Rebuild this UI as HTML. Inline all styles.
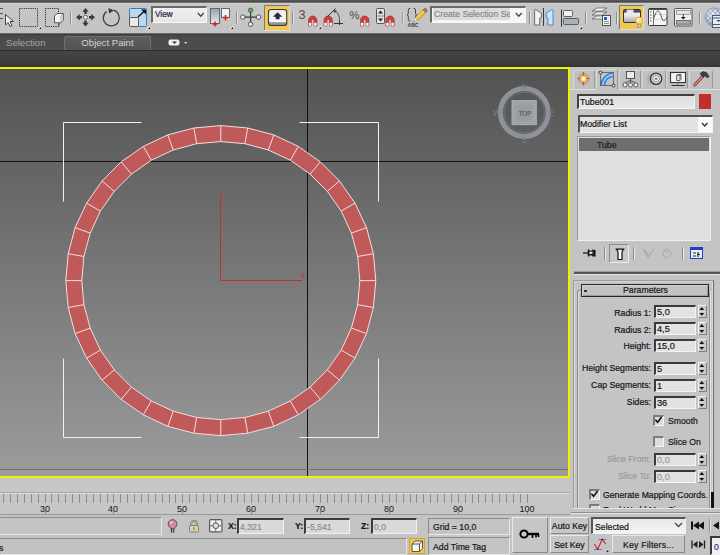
<!DOCTYPE html>
<html><head><meta charset="utf-8">
<style>
*{margin:0;padding:0;box-sizing:border-box}
html,body{width:720px;height:555px;overflow:hidden;background:#c4c4c4;font-family:"Liberation Sans",sans-serif;font-size:8.7px;color:#14141c;-webkit-text-stroke:0.2px currentColor}
.a{position:absolute}
svg{position:absolute;overflow:visible}
svg text{-webkit-text-stroke:0}
.sunk{border-style:solid;border-width:1px;border-color:#6c6c6c #f2f2f2 #f2f2f2 #6c6c6c;background:#e4e4e4}
.fld{position:absolute;border-style:solid;border-width:2px 1px 1px 2px;border-color:#3a3a3a #f4f4f4 #f4f4f4 #3a3a3a;background:#e2e2e2;padding-left:2px;line-height:9px;white-space:nowrap;overflow:hidden}
.raised{border-style:solid;border-width:1px;border-color:#ececec #8a8a8a #8a8a8a #ececec;background:#c4c4c4}
.lbl{position:absolute;white-space:nowrap;text-align:right;line-height:10px}
.sep{position:absolute;width:1px;height:12px;top:12px;background:#8c8c8c;border-right:1px solid #e4e4e4;box-sizing:content-box}
.spin{position:absolute;width:9px;height:13px;border:1px solid;border-color:#f0f0f0 #808080 #808080 #f0f0f0;background:#c8c8c8}
.chk{position:absolute;width:11px;height:11px;border-style:solid;border-width:2px 1px 1px 2px;border-color:#7c7c7c #f6f6f6 #f6f6f6 #7c7c7c;background:#dcdcdc}
.tab{position:absolute;top:70px;width:22px;height:19px;border:1px solid;border-color:#d6d6d6 #9a9a9a transparent #d6d6d6;background:#c0c0c0;border-radius:2px 2px 0 0}
</style></head><body>
<!-- top strip & toolbar -->
<div class="a" style="left:0;top:0;width:720px;height:3px;background:linear-gradient(#5a5a5a,#4a4a4a 60%,#8c8c8c)"></div>
<div class="a" style="left:0;top:3px;width:720px;height:30px;background:linear-gradient(#d0d0d0,#c6c6c6 2px,#c4c4c4 100%)"></div>
<div class="a" style="left:0;top:33px;width:720px;height:1px;background:#6a6a6a"></div>

<!-- toolbar icons -->
<svg style="left:0;top:0" width="720" height="34" viewBox="0 0 720 34">
<!-- select object: lines + cursor -->
<path d="M0,8.5H3M0,13.5H3M0,18.5H3" stroke="#555" stroke-width="1.2"/>
<path d="M5.5,14.5V25L8,22.5L10,26.5L12,25.5L10,21.5H13.5Z" fill="#f4f4f4" stroke="#333" stroke-width="0.9" stroke-linejoin="round"/>
<!-- select region rect -->
<rect x="19.5" y="8.5" width="18" height="18" fill="none" stroke="#333" stroke-width="1" stroke-dasharray="1.2,1"/>
<path d="M37.5,29.5L41.0,26" stroke="#f4f4f4" stroke-width="1"/><path d="M39.0,29H41.0V27Z" fill="#111"/>
<!-- select window/crossing -->
<rect x="45.5" y="8.5" width="13" height="18" fill="none" stroke="#333" stroke-width="1" stroke-dasharray="1.2,1"/>
<path d="M59,22V26.5" stroke="#555" stroke-width="1"/>
<path d="M54.5,16L57,13.5H63.5V20L61,22.8H54.5Z" fill="#f2f4f6" stroke="#555" stroke-width="1" stroke-linejoin="round"/>
<path d="M61,16V22.5M61,16L63.5,13.5" fill="none" stroke="#888" stroke-width="0.7"/>
<path d="M61.3,16.3L63.2,14.2V19.8L61.3,22Z" fill="#c8ccd0"/>
<!-- sep -->
<path d="M70.5,12V25" stroke="#8a8a8a"/><path d="M71.5,12V25" stroke="#e4e4e4"/>
<!-- move -->
<g fill="#3a3a3a"><path d="M85.5,8L82.3,11.8H84.3V14H86.7V11.8H88.7Z"/><path d="M85.5,26.6L82.3,22.8H84.3V20.6H86.7V22.8H88.7Z"/><path d="M76,17.3L79.8,14.1V16.1H82V18.5H79.8V20.5Z"/><path d="M95,17.3L91.2,14.1V16.1H89V18.5H91.2V20.5Z"/></g>
<circle cx="85.5" cy="17.3" r="2" fill="#f6f6f6" stroke="#666" stroke-width="1"/>
<!-- rotate -->
<path d="M113.5,10.2A8,8 0 1 1 106.5,11.5" fill="none" stroke="#3c3c3c" stroke-width="1.2"/>
<path d="M108.5,8L114,10.5L109,13.5Z" fill="#3c3c3c"/>
<!-- scale -->
<rect x="129.5" y="8.5" width="17" height="18" fill="#bcd8ea" stroke="#3a7ac0" stroke-width="1" rx="1"/>
<rect x="129.5" y="17.5" width="9" height="9" fill="#e8e8e8" stroke="#555" stroke-width="1" rx="1"/>
<path d="M138,17L145,10.5" stroke="#111" stroke-width="1.3"/><path d="M141,9.5H146V14.5Z" fill="#111"/>
<path d="M146.5,29.5L150.0,26" stroke="#f4f4f4" stroke-width="1"/><path d="M148.0,29H150.0V27Z" fill="#111"/>
<!-- mirror-ish pivot icon -->
<rect x="210.5" y="8.5" width="9" height="15" fill="url(#gg)" stroke="#606870" stroke-width="1"/>
<rect x="221.5" y="8.5" width="8" height="9" fill="#f2f2f2" stroke="#606870" stroke-width="1"/>
<path d="M215,21.5V26.5M212.5,24H217.5M225.5,15V20.5M223,17.5H228" stroke="#e01818" stroke-width="1.5"/>
<path d="M229.5,29.5L233.0,26" stroke="#f4f4f4" stroke-width="1"/><path d="M231.0,29H233.0V27Z" fill="#111"/>
<defs><linearGradient id="gg" x1="0" x2="0" y1="0" y2="1"><stop offset="0" stop-color="#98a0a8"/><stop offset="1" stop-color="#e8eaec"/></linearGradient></defs>
<path d="M236.5,12V24" stroke="#8a8a8a"/><path d="M237.5,12V24" stroke="#e4e4e4"/>
<!-- link/pivot -->
<path d="M250.6,10.5V24.3M242.8,17.1H258.6" stroke="#3c3c3c" stroke-width="1.2"/>
<circle cx="250.6" cy="10.3" r="2.2" fill="#58b048" stroke="#3a5a3a" stroke-width="0.8"/>
<circle cx="242.8" cy="17.1" r="2.2" fill="#f0f0f0" stroke="#444" stroke-width="0.9"/>
<circle cx="258.6" cy="17.1" r="2.2" fill="#f0f0f0" stroke="#444" stroke-width="0.9"/>
<circle cx="250.6" cy="24.3" r="2.2" fill="#f0f0f0" stroke="#444" stroke-width="0.9"/>
<!-- pressed yellow button -->
<rect x="264.5" y="5.5" width="25" height="25" fill="#f2c84e" stroke="#dcdcdc" stroke-width="1"/><path d="M264.5,30V5.5H289.5" fill="none" stroke="#7a7a7a" stroke-width="1"/>
<rect x="268.5" y="9.5" width="18.2" height="16" rx="2.5" fill="url(#kg)" stroke="#3a3a3a" stroke-width="1.1"/>
<defs><linearGradient id="kg" x1="0" x2="0" y1="0" y2="1"><stop offset="0" stop-color="#e8eaee"/><stop offset="0.4" stop-color="#f2f4f6"/><stop offset="0.76" stop-color="#fafafa"/><stop offset="0.78" stop-color="#a8aeb6"/><stop offset="1" stop-color="#7a8088"/></linearGradient></defs>
<path d="M277.6,12.2L272.8,16.8H275.6V19.2H279.6V16.8H282.4Z" fill="#2a2e34"/>
<path d="M292.5,12V24" stroke="#8a8a8a"/><path d="M293.5,12V24" stroke="#e4e4e4"/>
<!-- 3 snap -->
<text x="298.6" y="18.6" font-size="12.6" fill="#4a4a4a" font-family="Liberation Sans">3</text>
<g id="mag"><path d="M308.5,26V20.2A4.2,4.2 0 0 1 316.9,20.2V26H314V20.6A1.3,1.3 0 0 0 311.4,20.6V26Z" fill="#d83a3a" stroke="#8a2a2a" stroke-width="0.6"/><rect x="308.8" y="22.8" width="2.5" height="3" fill="#f4f4f4"/><rect x="314.1" y="22.8" width="2.5" height="3" fill="#f4f4f4"/></g>
<path d="M317.5,29.5L321.0,26" stroke="#f4f4f4" stroke-width="1"/><path d="M319.0,29H321.0V27Z" fill="#111"/>
<!-- angle snap -->
<use href="#mag" x="15.5"/>
<path d="M327.5,16.5L335.5,8.5M334,23.5H343M339.5,21V25" stroke="#333" stroke-width="1"/>
<path d="M335,10.5Q340,14 339.5,22" fill="none" stroke="#444" stroke-width="0.9"/>
<path d="M333,10L337,11L334.5,13Z" fill="#333"/>
<!-- percent snap -->
<text x="349.3" y="18.6" font-size="11.5" fill="#4a4a4a" font-family="Liberation Sans">%</text>
<use href="#mag" x="52"/>
<!-- spinner snap -->
<rect x="376.5" y="8.5" width="8" height="15" rx="1" fill="#e4e4e4" stroke="#555" stroke-width="1"/>
<path d="M378,13.5H383L380.5,10.5ZM378,18.5H383L380.5,21.5Z" fill="#222"/>
<path d="M376.5,16H384.5" stroke="#666" stroke-width="0.8"/>
<use href="#mag" x="77.3"/>
<path d="M402.5,12V24" stroke="#9a9a9a"/><path d="M403.5,12V24" stroke="#dcdcdc"/>
<!-- named sel -->
<path d="M410.3,8.3Q408.3,8.3 408.3,10V13.2Q408.3,14.6 407,14.8Q408.3,15 408.3,16.4V19.6Q408.3,21.2 410.3,21.2" fill="none" stroke="#444" stroke-width="1"/>
<path d="M413.5,8.3Q415.5,8.3 415.5,10V13.2Q415.5,14.6 416.8,14.8Q415.5,15 415.5,16.4V19.6Q415.5,21.2 413.5,21.2" fill="none" stroke="#444" stroke-width="1"/>
<path d="M415.2,17.6L423,9.8L425.8,12.6L418,20.4Z" fill="#f0c030" stroke="#8a6a20" stroke-width="0.5"/>
<path d="M416,18.4L423.6,10.8" stroke="#fae890" stroke-width="0.9"/>
<path d="M423,9.8L424.2,8.6Q425.2,7.8 426.2,8.8L426.8,9.4Q427.6,10.4 426.9,11.4L425.8,12.6Z" fill="#c07840" stroke="#7a4a20" stroke-width="0.5"/>
<path d="M415.2,17.6L418,20.4L413.6,21.8Z" fill="#f2f2f2" stroke="#888" stroke-width="0.5"/>
<text x="413" y="27.3" font-size="5" fill="#3a3a3a" text-anchor="middle" font-family="Liberation Sans" font-weight="bold">ABC</text>
</svg>
<!-- View dropdown -->
<div class="a" style="left:151px;top:6px;width:56px;height:17px;border-style:solid;border-width:2px 1px 1px 2px;border-color:#6a6a6a #f8f8f8 #f8f8f8 #6a6a6a;background:linear-gradient(#f0f0f0,#e6e6e6);padding:2px 0 0 2px;line-height:10px;color:#202040;font-size:8.2px">View</div>
<svg style="left:197px;top:12px" width="8" height="6"><path d="M0.8,1L3.75,4.2L6.7,1" fill="none" stroke="#444" stroke-width="1.3"/></svg>
<!-- Create Selection Set -->
<div class="a" style="left:430px;top:6px;width:96px;height:17px;border-style:solid;border-width:2px 1px 1px 2px;border-color:#6a6a6a #f8f8f8 #f8f8f8 #6a6a6a;background:#f6f6f6;line-height:10px"></div>
<div class="a" style="left:433px;top:8px;width:77px;height:12px;background:#dcdcdc;padding:1px 0 0 1px;line-height:10px;color:#8a8a8a;white-space:nowrap;overflow:hidden">Create Selection Se</div>
<svg style="left:515px;top:12px" width="8" height="6"><path d="M0.8,1L3.75,4.2L6.7,1" fill="none" stroke="#444" stroke-width="1.3"/></svg>
<svg style="left:0;top:0" width="720" height="34" viewBox="0 0 720 34">
<path d="M529.5,12V24" stroke="#8a8a8a"/><path d="M530.5,12V24" stroke="#e4e4e4"/>
<!-- mirror -->
<path d="M534.6,25V10.6Q534.6,9.2 536,9.7L541.4,13.2V17.3L539.7,18V25Z" fill="#f0f2f4" stroke="#5a6068" stroke-width="0.9" stroke-linejoin="round"/>
<path d="M543.5,8V26" stroke="#3a3a3a" stroke-width="1"/>
<path d="M553,25V10.6Q553,9.2 551.6,9.7L546.2,13.2V17.3L547.9,18V25Z" fill="#cce4f4" stroke="#3a80c8" stroke-width="0.9" stroke-linejoin="round"/>
<!-- align -->
<path d="M561.5,9.5V26.5" stroke="#333" stroke-width="1"/>
<rect x="563.5" y="10.5" width="9" height="6" rx="1" fill="#f0f0f0" stroke="#555" stroke-width="0.9"/>
<rect x="563.5" y="18.5" width="15" height="6" rx="1" fill="#a8b0b8" stroke="#555" stroke-width="0.9"/>
<path d="M578.5,29.5L582.0,26" stroke="#f4f4f4" stroke-width="1"/><path d="M580.0,29H582.0V27Z" fill="#111"/>
<path d="M585.5,12V24" stroke="#8a8a8a"/><path d="M586.5,12V24" stroke="#e4e4e4"/>
<!-- layers -->
<path d="M592,11L597,8H607L602,11Z M592,15L597,12H607L602,15Z M592,19L597,16H604L602,19Z" fill="#f4f4f4" stroke="#666" stroke-width="0.8"/>
<rect x="602.5" y="15.5" width="8" height="10" fill="#f2f2f2" stroke="#444" stroke-width="0.9"/>
<rect x="604" y="17" width="3" height="3" fill="#2060c0"/>
<path d="M604,21.5H609M604,23.5H609" stroke="#666" stroke-width="0.7"/>
<path d="M616.5,12V24" stroke="#8a8a8a"/><path d="M617.5,12V24" stroke="#e4e4e4"/>
<!-- scene explorer (pressed) -->
<rect x="619.5" y="5.5" width="24" height="24" fill="#f2c84e" stroke="#dcdcdc" stroke-width="1"/><path d="M619.5,29.5V5.5H643.5" fill="none" stroke="#7a7a7a" stroke-width="1"/>
<defs><linearGradient id="fg" x1="0" x2="0" y1="0" y2="1"><stop offset="0" stop-color="#fafafa"/><stop offset="0.5" stop-color="#e6e6e6"/><stop offset="1" stop-color="#a0a4a8"/></linearGradient></defs>
<rect x="623.5" y="9.5" width="17" height="13" rx="1" fill="url(#fg)" stroke="#333" stroke-width="1"/>
<rect x="624" y="10" width="16" height="2.6" fill="#4a4e54"/>
<rect x="626.5" y="9.6" width="7" height="3.4" fill="#e4e6e8"/>
<circle cx="639" cy="20.6" r="3.5" fill="#f6e27a" stroke="#e8a040" stroke-width="0.9"/>
<circle cx="638.2" cy="19.8" r="1.3" fill="#fdf8d0"/>
<rect x="637.4" y="24.2" width="3.2" height="2.8" rx="0.8" fill="#d0d4d8" stroke="#555" stroke-width="0.5"/>
<!-- curve editor -->
<rect x="648.5" y="8.5" width="18.5" height="17" rx="1" fill="#f6f6f6" stroke="#3a3a3a" stroke-width="1"/>
<path d="M649,9.3H666.5" stroke="#3a3a3a" stroke-width="1.2"/>
<path d="M653.5,9.5V25M654,14.5H666.5M654,19.5H666.5" stroke="#c8c8c8" stroke-width="0.7"/>
<path d="M653.5,9.5V25" stroke="#555" stroke-width="0.8"/>
<path d="M650,12H651.5M650,15H651.5M650,18H651.5M650,21H651.5" stroke="#555" stroke-width="1"/>
<path d="M653.8,18.5C655.5,13 656.5,11 658,11S660.5,14 661.5,17S663,20.8 664,20.8S666,19 667,17" fill="none" stroke="#555" stroke-width="1"/>
<!-- dope / track -->
<rect x="674.5" y="8.5" width="17.5" height="17.5" rx="1" fill="#f0f0f0" stroke="#555" stroke-width="1"/>
<rect x="676.3" y="10.6" width="14" height="3.6" fill="#e8e8e8" stroke="#7a7a7a" stroke-width="0.7"/>
<rect x="676.3" y="20.6" width="14" height="3.6" fill="#a4acb4" stroke="#555" stroke-width="0.8"/>
<path d="M683.3,14.3V17.5" stroke="#222" stroke-width="0.9"/>
<path d="M680.8,17H685.8L683.3,19.6Z" fill="#222"/>
<path d="M699.5,12V24" stroke="#8a8a8a"/><path d="M700.5,12V24" stroke="#e4e4e4"/>
<!-- render setup (clipped) -->
<defs><pattern id="chk" width="5" height="5" patternUnits="userSpaceOnUse" x="704" y="7"><rect width="5" height="5" fill="#eef2f8"/><rect width="2.5" height="2.5" fill="#8aa0bc"/><rect x="2.5" y="2.5" width="2.5" height="2.5" fill="#8aa0bc"/></pattern>
<radialGradient id="shd" cx="0.4" cy="0.35" r="0.7"><stop offset="0" stop-color="#fff" stop-opacity="0.3"/><stop offset="1" stop-color="#304870" stop-opacity="0.45"/></radialGradient></defs>
<circle cx="714.5" cy="17.3" r="9.4" fill="url(#chk)"/>
<circle cx="714.5" cy="17.3" r="9.4" fill="url(#shd)" stroke="#7088a8" stroke-width="0.6"/>
<rect x="712.5" y="15.5" width="9" height="12" fill="#e8ecf0" stroke="#4a5a78" stroke-width="1"/>
<path d="M713,18H721M713,24.5H721" stroke="#4a5a78" stroke-width="1"/>
<path d="M716.5,20L718.5,22L720.5,20Z" fill="#2a3a58"/>
</svg>
<!-- tab bar -->
<div class="a" style="left:0;top:34px;width:720px;height:16px;background:linear-gradient(#3c3c3c 0px,#4a4a4a 2px,#4d4d4d 100%)"></div>
<div class="a" style="left:0;top:50px;width:720px;height:1px;background:#2c2c2c"></div>
<div class="a" style="left:0;top:51px;width:720px;height:16px;background:linear-gradient(#464646,#3a3a3a 85%,#333)"></div>
<div class="a" style="left:6px;top:37px;font-size:9.6px;color:#a2a6aa;line-height:11px;-webkit-text-stroke:0">Selection</div>
<div class="a" style="left:64px;top:36px;width:87px;height:14px;background:linear-gradient(#5c5c5c,#545454);border:1px solid #6e6e6e;border-bottom:none;border-radius:2px 2px 0 0"></div>
<div class="a" style="left:64px;top:37px;width:87px;text-align:center;font-size:9.6px;color:#d2d4d6;line-height:11px;-webkit-text-stroke:0">Object Paint</div>
<svg style="left:168px;top:39px" width="20" height="8"><rect x="0.5" y="0.5" width="11" height="6" rx="2" fill="#f0f0f0"/><path d="M4,2.5h5l-2.5,2.5z" fill="#333"/><path d="M16,3h3.5l-1.75,2z" fill="#cfcfcf"/></svg>

<!-- viewport -->
<div class="a" style="left:0;top:67px;width:570px;height:411px;background:#f0f000"></div>
<div class="a" style="left:0;top:69px;width:568px;height:407px;background:linear-gradient(#525252 0%,#5a5a5a 10%,#9c9c9c 100%);overflow:hidden">
<svg width="568" height="407" style="left:0;top:0" viewBox="0 69 568 407">
<line x1="0" y1="161.5" x2="568" y2="161.5" stroke="#111" stroke-width="1"/>
<line x1="307.5" y1="69" x2="307.5" y2="476" stroke="#111" stroke-width="1"/>
<line x1="0" y1="469.5" x2="568" y2="469.5" stroke="#707070" stroke-width="1"/>
<g fill="none" stroke="#f0f0f0" stroke-width="1">
<path d="M63.5,201.5V122.5H141.5"/><path d="M299.5,122.5H378.5V201.5"/>
<path d="M63.5,358.5V437.5H141.5"/><path d="M299.5,437.5H378.5V358.5"/>
</g>
<path d="M375.8,280.6 L373.4,253.7 L366.5,227.6 L355.0,203.1 L339.5,181.0 L320.4,161.9 L298.3,146.4 L273.8,134.9 L247.7,128.0 L220.8,125.6 L193.9,128.0 L167.8,134.9 L143.3,146.4 L121.2,161.9 L102.1,181.0 L86.6,203.1 L75.1,227.6 L68.2,253.7 L65.8,280.6 L68.2,307.5 L75.1,333.6 L86.6,358.1 L102.1,380.2 L121.2,399.3 L143.3,414.8 L167.8,426.3 L193.9,433.2 L220.8,435.6 L247.7,433.2 L273.8,426.3 L298.3,414.8 L320.4,399.3 L339.5,380.2 L355.0,358.1 L366.5,333.6 L373.4,307.5Z M357.7,304.7 L351.4,328.1 L341.2,350.1 L327.3,369.9 L310.1,387.1 L290.3,401.0 L268.3,411.2 L244.9,417.5 L220.8,419.6 L196.7,417.5 L173.3,411.2 L151.3,401.0 L131.5,387.1 L114.3,369.9 L100.4,350.1 L90.2,328.1 L83.9,304.7 L81.8,280.6 L83.9,256.5 L90.2,233.1 L100.4,211.1 L114.3,191.3 L131.5,174.1 L151.3,160.2 L173.3,150.0 L196.7,143.7 L220.8,141.6 L244.9,143.7 L268.3,150.0 L290.3,160.2 L310.1,174.1 L327.3,191.3 L341.2,211.1 L351.4,233.1 L357.7,256.5 L359.8,280.6Z" fill="#c05a5a" fill-rule="evenodd" stroke="#f2dede" stroke-width="1"/><path d="M375.8,280.6L359.8,280.6M373.4,253.7L357.7,256.5M366.5,227.6L351.4,233.1M355.0,203.1L341.2,211.1M339.5,181.0L327.3,191.3M320.4,161.9L310.1,174.1M298.3,146.4L290.3,160.2M273.8,134.9L268.3,150.0M247.7,128.0L244.9,143.7M220.8,125.6L220.8,141.6M193.9,128.0L196.7,143.7M167.8,134.9L173.3,150.0M143.3,146.4L151.3,160.2M121.2,161.9L131.5,174.1M102.1,181.0L114.3,191.3M86.6,203.1L100.4,211.1M75.1,227.6L90.2,233.1M68.2,253.7L83.9,256.5M65.8,280.6L81.8,280.6M68.2,307.5L83.9,304.7M75.1,333.6L90.2,328.1M86.6,358.1L100.4,350.1M102.1,380.2L114.3,369.9M121.2,399.3L131.5,387.1M143.3,414.8L151.3,401.0M167.8,426.3L173.3,411.2M193.9,433.2L196.7,417.5M220.8,435.6L220.8,419.6M247.7,433.2L244.9,417.5M273.8,426.3L268.3,411.2M298.3,414.8L290.3,401.0M320.4,399.3L310.1,387.1M339.5,380.2L327.3,369.9M355.0,358.1L341.2,350.1M366.5,333.6L351.4,328.1M373.4,307.5L357.7,304.7" stroke="#f2dede" stroke-width="1"/>
<g stroke="#c03030" stroke-width="1" fill="none"><path d="M220.5,199V280.5H302"/></g>
<text x="219.8" y="196.3" font-size="9" fill="#c83434" font-family="Liberation Sans">y</text>
<text x="300.6" y="277.8" font-size="9.6" fill="#c83434" font-family="Liberation Sans">x</text>
<!-- viewcube -->
<g>
<circle cx="524.3" cy="112.5" r="23.7" fill="none" stroke="#8e9399" stroke-width="5.4"/>
<circle cx="524.3" cy="112.5" r="21" fill="none" stroke="#5e6266" stroke-width="0.9"/>
<circle cx="524.3" cy="112.5" r="20.1" fill="none" stroke="#7a7e82" stroke-width="0.6"/>
<rect x="511.7" y="100.1" width="25" height="25" fill="#9ea3a8"/>
<rect x="512.2" y="100.6" width="24" height="24" fill="none" stroke="#a8adb2" stroke-width="1"/>
<rect x="516.5" y="105" width="15.5" height="15.5" fill="#989da2"/>
<text x="524.8" y="115.6" font-size="6.6" fill="#62666c" text-anchor="middle" font-family="Liberation Sans" font-weight="bold" letter-spacing="-0.3">TOP</text>
<text x="524.4" y="89.6" font-size="8.4" fill="#7c8288" text-anchor="middle" font-family="Liberation Sans">N</text>
<text x="524.4" y="142.8" font-size="8.4" fill="#7c8288" text-anchor="middle" font-family="Liberation Sans">S</text>
<text x="496.8" y="115.6" font-size="8.4" fill="#7c8288" text-anchor="middle" font-family="Liberation Sans">W</text>
<text x="551.4" y="115.6" font-size="8.4" fill="#7c8288" text-anchor="middle" font-family="Liberation Sans">E</text>
</g>
</svg>
</div>

<!-- track bar -->
<div class="a" style="left:0;top:478px;width:570px;height:37px;background:#c6c6c6"></div>
<svg width="570" height="40" style="left:0;top:0" viewBox="0 0 570 40"></svg>
<svg width="570" height="40" style="left:0;top:478px" viewBox="0 478 570 40">
<line x1="0" y1="492.5" x2="570" y2="492.5" stroke="#a8a8a8"/>
<line x1="0" y1="493.5" x2="570" y2="493.5" stroke="#dedede"/>
<g font-size="9" fill="#14141c" font-family="Liberation Sans" style="-webkit-text-stroke:0.25px #14141c"><line x1="3.5" y1="494" x2="3.5" y2="503" stroke="#8a8a8a"/><line x1="10.5" y1="494" x2="10.5" y2="503" stroke="#8a8a8a"/><line x1="17.5" y1="494" x2="17.5" y2="503" stroke="#8a8a8a"/><line x1="24.5" y1="494" x2="24.5" y2="503" stroke="#8a8a8a"/><line x1="31.5" y1="494" x2="31.5" y2="503" stroke="#8a8a8a"/><line x1="38.5" y1="494" x2="38.5" y2="503" stroke="#8a8a8a"/><line x1="45.5" y1="494" x2="45.5" y2="503" stroke="#8a8a8a"/><line x1="45.5" y1="511" x2="45.5" y2="515" stroke="#8a8a8a"/><text x="45.0" y="512" text-anchor="middle">30</text><line x1="51.5" y1="494" x2="51.5" y2="503" stroke="#8a8a8a"/><line x1="58.5" y1="494" x2="58.5" y2="503" stroke="#8a8a8a"/><line x1="65.5" y1="494" x2="65.5" y2="503" stroke="#8a8a8a"/><line x1="72.5" y1="494" x2="72.5" y2="503" stroke="#8a8a8a"/><line x1="79.5" y1="494" x2="79.5" y2="503" stroke="#8a8a8a"/><line x1="86.5" y1="494" x2="86.5" y2="503" stroke="#8a8a8a"/><line x1="93.5" y1="494" x2="93.5" y2="503" stroke="#8a8a8a"/><line x1="100.5" y1="494" x2="100.5" y2="503" stroke="#8a8a8a"/><line x1="107.5" y1="494" x2="107.5" y2="503" stroke="#8a8a8a"/><line x1="113.5" y1="494" x2="113.5" y2="503" stroke="#8a8a8a"/><line x1="113.5" y1="511" x2="113.5" y2="515" stroke="#8a8a8a"/><text x="113.0" y="512" text-anchor="middle">40</text><line x1="120.5" y1="494" x2="120.5" y2="503" stroke="#8a8a8a"/><line x1="127.5" y1="494" x2="127.5" y2="503" stroke="#8a8a8a"/><line x1="134.5" y1="494" x2="134.5" y2="503" stroke="#8a8a8a"/><line x1="141.5" y1="494" x2="141.5" y2="503" stroke="#8a8a8a"/><line x1="148.5" y1="494" x2="148.5" y2="503" stroke="#8a8a8a"/><line x1="155.5" y1="494" x2="155.5" y2="503" stroke="#8a8a8a"/><line x1="162.5" y1="494" x2="162.5" y2="503" stroke="#8a8a8a"/><line x1="169.5" y1="494" x2="169.5" y2="503" stroke="#8a8a8a"/><line x1="175.5" y1="494" x2="175.5" y2="503" stroke="#8a8a8a"/><line x1="182.5" y1="494" x2="182.5" y2="503" stroke="#8a8a8a"/><line x1="182.5" y1="511" x2="182.5" y2="515" stroke="#8a8a8a"/><text x="182.0" y="512" text-anchor="middle">50</text><line x1="189.5" y1="494" x2="189.5" y2="503" stroke="#8a8a8a"/><line x1="196.5" y1="494" x2="196.5" y2="503" stroke="#8a8a8a"/><line x1="203.5" y1="494" x2="203.5" y2="503" stroke="#8a8a8a"/><line x1="210.5" y1="494" x2="210.5" y2="503" stroke="#8a8a8a"/><line x1="217.5" y1="494" x2="217.5" y2="503" stroke="#8a8a8a"/><line x1="224.5" y1="494" x2="224.5" y2="503" stroke="#8a8a8a"/><line x1="231.5" y1="494" x2="231.5" y2="503" stroke="#8a8a8a"/><line x1="237.5" y1="494" x2="237.5" y2="503" stroke="#8a8a8a"/><line x1="244.5" y1="494" x2="244.5" y2="503" stroke="#8a8a8a"/><line x1="251.5" y1="494" x2="251.5" y2="503" stroke="#8a8a8a"/><line x1="251.5" y1="511" x2="251.5" y2="515" stroke="#8a8a8a"/><text x="251.0" y="512" text-anchor="middle">60</text><line x1="258.5" y1="494" x2="258.5" y2="503" stroke="#8a8a8a"/><line x1="265.5" y1="494" x2="265.5" y2="503" stroke="#8a8a8a"/><line x1="272.5" y1="494" x2="272.5" y2="503" stroke="#8a8a8a"/><line x1="279.5" y1="494" x2="279.5" y2="503" stroke="#8a8a8a"/><line x1="286.5" y1="494" x2="286.5" y2="503" stroke="#8a8a8a"/><line x1="293.5" y1="494" x2="293.5" y2="503" stroke="#8a8a8a"/><line x1="299.5" y1="494" x2="299.5" y2="503" stroke="#8a8a8a"/><line x1="306.5" y1="494" x2="306.5" y2="503" stroke="#8a8a8a"/><line x1="313.5" y1="494" x2="313.5" y2="503" stroke="#8a8a8a"/><line x1="320.5" y1="494" x2="320.5" y2="503" stroke="#8a8a8a"/><line x1="320.5" y1="511" x2="320.5" y2="515" stroke="#8a8a8a"/><text x="320.0" y="512" text-anchor="middle">70</text><line x1="327.5" y1="494" x2="327.5" y2="503" stroke="#8a8a8a"/><line x1="334.5" y1="494" x2="334.5" y2="503" stroke="#8a8a8a"/><line x1="341.5" y1="494" x2="341.5" y2="503" stroke="#8a8a8a"/><line x1="348.5" y1="494" x2="348.5" y2="503" stroke="#8a8a8a"/><line x1="355.5" y1="494" x2="355.5" y2="503" stroke="#8a8a8a"/><line x1="361.5" y1="494" x2="361.5" y2="503" stroke="#8a8a8a"/><line x1="368.5" y1="494" x2="368.5" y2="503" stroke="#8a8a8a"/><line x1="375.5" y1="494" x2="375.5" y2="503" stroke="#8a8a8a"/><line x1="382.5" y1="494" x2="382.5" y2="503" stroke="#8a8a8a"/><line x1="389.5" y1="494" x2="389.5" y2="503" stroke="#8a8a8a"/><line x1="389.5" y1="511" x2="389.5" y2="515" stroke="#8a8a8a"/><text x="389.0" y="512" text-anchor="middle">80</text><line x1="396.5" y1="494" x2="396.5" y2="503" stroke="#8a8a8a"/><line x1="403.5" y1="494" x2="403.5" y2="503" stroke="#8a8a8a"/><line x1="410.5" y1="494" x2="410.5" y2="503" stroke="#8a8a8a"/><line x1="416.5" y1="494" x2="416.5" y2="503" stroke="#8a8a8a"/><line x1="423.5" y1="494" x2="423.5" y2="503" stroke="#8a8a8a"/><line x1="430.5" y1="494" x2="430.5" y2="503" stroke="#8a8a8a"/><line x1="437.5" y1="494" x2="437.5" y2="503" stroke="#8a8a8a"/><line x1="444.5" y1="494" x2="444.5" y2="503" stroke="#8a8a8a"/><line x1="451.5" y1="494" x2="451.5" y2="503" stroke="#8a8a8a"/><line x1="458.5" y1="494" x2="458.5" y2="503" stroke="#8a8a8a"/><line x1="458.5" y1="511" x2="458.5" y2="515" stroke="#8a8a8a"/><text x="458.0" y="512" text-anchor="middle">90</text><line x1="465.5" y1="494" x2="465.5" y2="503" stroke="#8a8a8a"/><line x1="472.5" y1="494" x2="472.5" y2="503" stroke="#8a8a8a"/><line x1="478.5" y1="494" x2="478.5" y2="503" stroke="#8a8a8a"/><line x1="485.5" y1="494" x2="485.5" y2="503" stroke="#8a8a8a"/><line x1="492.5" y1="494" x2="492.5" y2="503" stroke="#8a8a8a"/><line x1="499.5" y1="494" x2="499.5" y2="503" stroke="#8a8a8a"/><line x1="506.5" y1="494" x2="506.5" y2="503" stroke="#8a8a8a"/><line x1="513.5" y1="494" x2="513.5" y2="503" stroke="#8a8a8a"/><line x1="520.5" y1="494" x2="520.5" y2="503" stroke="#8a8a8a"/><line x1="527.5" y1="494" x2="527.5" y2="503" stroke="#8a8a8a"/><line x1="527.5" y1="511" x2="527.5" y2="515" stroke="#8a8a8a"/><text x="527.0" y="512" text-anchor="middle">100</text></g>
<line x1="0" y1="514.5" x2="570" y2="514.5" stroke="#9a9a9a"/>
</svg>

<!-- command panel -->
<div class="a" style="left:570px;top:67px;width:150px;height:448px;background:#c4c4c4"></div>
<div class="a" style="left:570px;top:89px;width:150px;height:1px;background:#e0e0e0"></div>
<div class="tab" style="left:573px"></div>
<div class="tab" style="left:596px;top:69px;height:21px;background:#c4c4c4;border-bottom:none"></div>
<div class="tab" style="left:619px"></div>
<div class="tab" style="left:642px;width:24px"></div>
<div class="tab" style="left:666px"></div>
<div class="tab" style="left:689px;width:24px"></div>

<svg style="left:0;top:0" width="720" height="95" viewBox="0 0 720 95">
<!-- create star -->
<g transform="translate(583.5,78.7)">
<path d="M0,-6.8V6.8M-6,0H6" stroke="#c84838" stroke-width="1.3"/>
<path d="M-4.3,-4.3L4.3,4.3M4.3,-4.3L-4.3,4.3M-5.5,-2.2L5.5,2.2M-5.5,2.2L5.5,-2.2M-2.2,-5.5L2.2,5.5M2.2,-5.5L-2.2,5.5" stroke="#d86a50" stroke-width="0.8"/>
<circle r="3.4" fill="#f8c840" opacity="0.7"/>
<circle r="2.5" fill="#fae060"/><circle r="1.4" fill="#fffef0"/>
</g>
<!-- modify -->
<defs><linearGradient id="bg1" x1="0" y1="1" x2="1" y2="0"><stop offset="0" stop-color="#3a86d4"/><stop offset="1" stop-color="#5aa8e8"/></linearGradient></defs>
<rect x="600.5" y="72.5" width="13" height="13" fill="none" stroke="#555" stroke-width="0.8"/>
<path d="M600.8,85.5A12.7,12.7 0 0 1 613.5,72.8V76.8A8.7,8.7 0 0 0 604.8,85.5Z" fill="url(#bg1)" stroke="#2a6ab8" stroke-width="0.7"/>
<path d="M602.8,85.3A10.7,10.7 0 0 1 613.3,74.8" fill="none" stroke="#d0ecfc" stroke-width="1"/>
<circle cx="600.5" cy="72.5" r="1.5" fill="#e0e0e0" stroke="#3a3a3a" stroke-width="1"/>
<circle cx="613.5" cy="85.5" r="1.5" fill="#e0e0e0" stroke="#3a3a3a" stroke-width="1"/>
<!-- hierarchy -->
<rect x="626.5" y="71.5" width="8" height="7" fill="#eaeaea" stroke="#444" stroke-width="0.9"/>
<path d="M630.5,78.5V81M625,83L630.5,80.5L636,83M630.5,80.5V83" fill="none" stroke="#444" stroke-width="0.8"/>
<rect x="623.3" y="83" width="3.6" height="3.8" rx="1" fill="#f0f0f0" stroke="#444" stroke-width="0.8"/>
<rect x="628.7" y="83" width="3.6" height="3.8" rx="1" fill="#f0f0f0" stroke="#444" stroke-width="0.8"/>
<rect x="634.1" y="83" width="3.6" height="3.8" rx="1" fill="#f0f0f0" stroke="#444" stroke-width="0.8"/>
<!-- motion -->
<path d="M648.5,74.5Q647,79 648.5,83.5M650.5,73.5Q648.8,79 650.5,84.5" fill="none" stroke="#9a9a9a" stroke-width="0.7"/>
<circle cx="656.1" cy="78.8" r="5.6" fill="#f0f0f0" stroke="#333" stroke-width="1.4"/>
<circle cx="656.1" cy="78.8" r="3.4" fill="none" stroke="#777" stroke-width="0.9"/>
<circle cx="656.1" cy="78.8" r="1.4" fill="#888"/>
<!-- display -->
<rect x="670.5" y="72.5" width="15" height="10" fill="#f6f6f6" stroke="#333" stroke-width="1.1"/>
<path d="M676.5,75.5L677.5,74.5H681V79.5L680,80.5H676.5Z" fill="#e0e0e0" stroke="#444" stroke-width="0.8"/>
<path d="M676.5,75.5H680V80.5M680,75.5L681,74.5" fill="none" stroke="#444" stroke-width="0.6"/>
<path d="M677.5,83.5H678.5V84.5H677.5Z" fill="#333"/>
<path d="M671.5,85.5H684.5" stroke="#333" stroke-width="1"/>
<!-- hammer -->
<path d="M694.8,85L703,76" stroke="#5a3020" stroke-width="2.8" stroke-linecap="round"/>
<path d="M694.8,85L703,76" stroke="#d88a78" stroke-width="1.6" stroke-linecap="round"/>
<path d="M700,73.5L703,71.5L706.5,72.5L709,76.5L707.5,78L704.5,75.5L703.5,77.5L701,75Z" fill="#3a3e44" stroke="#222" stroke-width="0.5"/>
</svg>
<!-- name field -->
<div class="fld" style="left:577px;top:94px;width:118px;height:15px;background:linear-gradient(#dedede,#e8e8e8);padding-top:2px;padding-left:1px;border-color:#404040 #f4f4f4 #f4f4f4 #404040">Tube001</div>
<div class="a" style="left:699px;top:94px;width:12px;height:15px;background:#c22e2e"></div>
<div class="fld" style="left:578px;top:115px;width:135px;height:18px;background:#e2e2e2;padding-top:3px;padding-left:0px;border-color:#505050 #f4f4f4 #f4f4f4 #505050">Modifier List</div>
<div class="a" style="left:698px;top:117px;width:14px;height:15px;background:#fafafa"></div>
<svg style="left:701px;top:122px" width="10" height="6"><path d="M1,1L3.75,4L6.5,1" fill="none" stroke="#333" stroke-width="1.3"/></svg>
<!-- stack -->
<div class="a" style="left:577px;top:136px;width:134px;height:105px;border:1px solid;border-color:#9a9a9a #f0f0f0 #f0f0f0 #9a9a9a;background:#e0e0e0"></div>
<div class="a" style="left:579px;top:138px;width:130px;height:13px;background:#6e6e6e"></div>
<div class="a" style="left:597px;top:140px;line-height:10px;color:#202020">Tube</div>
<!-- stack buttons -->
<svg style="left:583px;top:248px" width="14" height="11"><path d="M0,5H5" stroke="#111" stroke-width="1.2"/><path d="M5.5,1.5V8.5M5.5,3Q8,4 10,3V7Q8,6 5.5,7M10,1.5V8.5" fill="#f0f0f0" stroke="#111" stroke-width="1.4"/><path d="M10.5,2V8.5H12.5V2Z" fill="#111"/><path d="M7,4.2H9.5" stroke="#fff" stroke-width="1"/></svg>
<div class="a" style="left:604px;top:247px;width:1px;height:13px;background:#8c8c8c;border-right:1px solid #e8e8e8;box-sizing:content-box"></div>
<div class="a" style="left:609px;top:244px;width:20px;height:19px;border:1px solid;border-color:#8e8e8e #ececec #ececec #8e8e8e;background:#c8c8c8"></div>
<svg style="left:615px;top:248px" width="10" height="13"><path d="M1,1.2Q3,2.2 3,4V11.5H7V4Q7,2.2 9,1.2Z" fill="#fafafa" stroke="#111" stroke-width="1.2" stroke-linejoin="round"/></svg>
<div class="a" style="left:633px;top:247px;width:1px;height:13px;background:#8c8c8c;border-right:1px solid #e8e8e8;box-sizing:content-box"></div>
<svg style="left:642px;top:248px" width="14" height="11"><path d="M1,1L6,9L12,1M3,2L6,7" fill="none" stroke="#a8a8a8" stroke-width="1.1"/></svg>
<svg style="left:662px;top:247px" width="11" height="12"><circle cx="5" cy="6.5" r="4" fill="none" stroke="#b0b0b0" stroke-width="1.2"/><path d="M2,4.5H8M3.5,2H6.5" stroke="#b0b0b0" stroke-width="1.1"/></svg>
<div class="a" style="left:682px;top:247px;width:1px;height:13px;background:#8c8c8c;border-right:1px solid #e8e8e8;box-sizing:content-box"></div>
<svg style="left:690px;top:247px" width="14" height="13"><rect x="0.5" y="0.5" width="12" height="11" fill="#e8eef8" stroke="#2040c0"/><rect x="0.5" y="0.5" width="12" height="2.5" fill="#2040c0"/><path d="M3,6H6M3,9H6M8,5V10M7,7.5H10" stroke="#2a2a2a" stroke-width="1.2"/></svg>
<!-- separator -->
<div class="a" style="left:574px;top:272px;width:146px;height:2px;background:#555;border-bottom:1px solid #e6e6e6;box-sizing:content-box"></div>
<div class="a" style="left:574px;top:271px;width:146px;height:1px;background:#9a9a9a"></div>
<!-- rollout -->
<div class="a" style="left:573px;top:280px;width:141px;height:240px;border:1px solid;border-color:#9c9c9c #6a6a6a transparent #9c9c9c;background:#c4c4c4"></div>
<div class="a" style="left:574px;top:281px;width:139px;height:240px;border:1px solid;border-color:#d6d6d6 #dedede transparent #d6d6d6"></div>
<div class="a" style="left:577px;top:290px;width:134px;height:230px;border:1px solid;border-color:#8e8e8e #e6e6e6 transparent #8e8e8e;border-radius:3px 3px 0 0"></div>
<div class="a" style="left:578px;top:291px;width:132px;height:230px;border:1px solid;border-color:#dadada #8e8e8e transparent #dadada;border-radius:3px 3px 0 0"></div>
<div class="a" style="left:581px;top:284px;width:128px;height:13px;border:1px solid #262626;background:#c2c2c2;box-shadow:inset 1px 1px 0 #d8d8d8, inset -1px -1px 0 #9a9a9a"></div>
<div class="a" style="left:584px;top:290px;width:3px;height:1.5px;background:#333"></div>
<div class="a" style="left:580px;top:285px;width:129px;text-align:center;line-height:10px;padding-left:2px">Parameters</div>

<div class="lbl" style="left:560px;width:91px;top:308px;color:#14141c">Radius 1:</div><div class="fld" style="left:654px;top:305px;width:42px;height:13px;padding-top:1px;padding-left:1px;font-size:9.2px;color:#14141c">5,0</div><div class="spin" style="left:698px;top:305px"><svg style="left:0;top:0" width="8" height="11"><path d="M0,5.5H7" stroke="#d4d4d4" stroke-width="1"/><path d="M0.4,3.9H5.2L2.8,1.1zM0.4,6.9H5.2L2.8,9.7z" fill="#111"/></svg></div><div class="lbl" style="left:560px;width:91px;top:325px;color:#14141c">Radius 2:</div><div class="fld" style="left:654px;top:322px;width:42px;height:13px;padding-top:1px;padding-left:1px;font-size:9.2px;color:#14141c">4,5</div><div class="spin" style="left:698px;top:322px"><svg style="left:0;top:0" width="8" height="11"><path d="M0,5.5H7" stroke="#d4d4d4" stroke-width="1"/><path d="M0.4,3.9H5.2L2.8,1.1zM0.4,6.9H5.2L2.8,9.7z" fill="#111"/></svg></div><div class="lbl" style="left:560px;width:91px;top:341px;color:#14141c">Height:</div><div class="fld" style="left:654px;top:339px;width:42px;height:13px;padding-top:1px;padding-left:1px;font-size:9.2px;color:#14141c">15,0</div><div class="spin" style="left:698px;top:339px"><svg style="left:0;top:0" width="8" height="11"><path d="M0,5.5H7" stroke="#d4d4d4" stroke-width="1"/><path d="M0.4,3.9H5.2L2.8,1.1zM0.4,6.9H5.2L2.8,9.7z" fill="#111"/></svg></div><div class="lbl" style="left:560px;width:91px;top:363px;color:#14141c">Height Segments:</div><div class="fld" style="left:654px;top:362px;width:42px;height:13px;padding-top:1px;padding-left:1px;font-size:9.2px;color:#14141c">5</div><div class="spin" style="left:698px;top:362px"><svg style="left:0;top:0" width="8" height="11"><path d="M0,5.5H7" stroke="#d4d4d4" stroke-width="1"/><path d="M0.4,3.9H5.2L2.8,1.1zM0.4,6.9H5.2L2.8,9.7z" fill="#111"/></svg></div><div class="lbl" style="left:560px;width:91px;top:380px;color:#14141c">Cap Segments:</div><div class="fld" style="left:654px;top:379px;width:42px;height:13px;padding-top:1px;padding-left:1px;font-size:9.2px;color:#14141c">1</div><div class="spin" style="left:698px;top:379px"><svg style="left:0;top:0" width="8" height="11"><path d="M0,5.5H7" stroke="#d4d4d4" stroke-width="1"/><path d="M0.4,3.9H5.2L2.8,1.1zM0.4,6.9H5.2L2.8,9.7z" fill="#111"/></svg></div><div class="lbl" style="left:560px;width:91px;top:397px;color:#14141c">Sides:</div><div class="fld" style="left:654px;top:396px;width:42px;height:13px;padding-top:1px;padding-left:1px;font-size:9.2px;color:#14141c">36</div><div class="spin" style="left:698px;top:396px"><svg style="left:0;top:0" width="8" height="11"><path d="M0,5.5H7" stroke="#d4d4d4" stroke-width="1"/><path d="M0.4,3.9H5.2L2.8,1.1zM0.4,6.9H5.2L2.8,9.7z" fill="#111"/></svg></div><div class="lbl" style="left:560px;width:91px;top:454px;color:#9a9a9a">Slice From:</div><div class="fld" style="left:654px;top:453px;width:42px;height:13px;padding-top:1px;padding-left:1px;font-size:9.2px;color:#9a9a9a">0,0</div><div class="spin" style="left:698px;top:453px"><svg style="left:0;top:0" width="8" height="11"><path d="M0,5.5H7" stroke="#d4d4d4" stroke-width="1"/><path d="M0.4,3.9H5.2L2.8,1.1zM0.4,6.9H5.2L2.8,9.7z" fill="#111"/></svg></div><div class="lbl" style="left:560px;width:91px;top:471px;color:#9a9a9a">Slice To:</div><div class="fld" style="left:654px;top:470px;width:42px;height:13px;padding-top:1px;padding-left:1px;font-size:9.2px;color:#9a9a9a">0,0</div><div class="spin" style="left:698px;top:470px"><svg style="left:0;top:0" width="8" height="11"><path d="M0,5.5H7" stroke="#d4d4d4" stroke-width="1"/><path d="M0.4,3.9H5.2L2.8,1.1zM0.4,6.9H5.2L2.8,9.7z" fill="#111"/></svg></div><div class="chk" style="left:653px;top:415px"></div><svg style="left:653px;top:415px" width="11" height="11"><path d="M2.4,4.8L4.6,7.2L8.6,2" fill="none" stroke="#111" stroke-width="1.6"/></svg><div class="lbl" style="left:668px;top:416px">Smooth</div><div class="chk" style="left:653px;top:436px"></div><div class="lbl" style="left:668px;top:437px">Slice On</div><div class="chk" style="left:589px;top:489px"></div><svg style="left:589px;top:489px" width="11" height="11"><path d="M2.4,4.8L4.6,7.2L8.6,2" fill="none" stroke="#111" stroke-width="1.6"/></svg><div class="lbl" style="left:603px;top:490px">Generate Mapping Coords.</div><div class="chk" style="left:589px;top:504px"></div><div class="lbl" style="left:603px;top:505px">Real-World Map Size</div>


<div class="a" style="left:711px;top:492px;width:3px;height:16px;background:#111"></div>
<!-- panel bottom clip -->
<div class="a" style="left:570px;top:508px;width:150px;height:9px;background:#c4c4c4"></div>
<div class="a" style="left:573px;top:508px;width:147px;height:1px;background:#e2e2e2"></div>
<div class="a" style="left:571px;top:512px;width:149px;height:1px;background:#8e8e8e"></div>
<div class="a" style="left:571px;top:513px;width:149px;height:1px;background:#e6e6e6"></div>
<!-- status bar -->
<div class="a" style="left:0;top:515px;width:720px;height:40px;background:#c4c4c4"></div>
<div class="a" style="left:0;top:517px;width:162px;height:18px;border-style:solid;border-width:1px;border-color:#8a8a8a #e8e8e8 #e8e8e8 transparent;background:#c4c4c4"></div>
<div class="a" style="left:0;top:538px;width:407px;height:17px;border-style:solid;border-width:1px;border-color:#8a8a8a #e8e8e8 #e8e8e8 transparent;background:#c2c2c2"></div>
<div class="a" style="left:-1px;top:543px;line-height:10px;color:#14141c">s</div>
<svg style="left:167px;top:519px" width="12" height="15"><path d="M4.3,8.5L4.6,13.8M6.9,8.5L6.6,13.8" stroke="#333" stroke-width="1.1"/><path d="M5.6,10.2C3.5,9 1.2,7.6 1.2,5.1A4.4,4.4 0 0 1 10,5.1C10,7.6 7.7,9 5.6,10.2Z" fill="#d98c9a" stroke="#444" stroke-width="0.9"/><ellipse cx="4.3" cy="3.6" rx="1.5" ry="1" fill="#f4d0d8"/></svg>
<svg style="left:188px;top:519px" width="12" height="14"><path d="M3.2,7V4.6A2.8,2.8 0 0 1 8.8,4.6V7" fill="none" stroke="#666" stroke-width="1.8"/><path d="M3.2,7V4.6A2.8,2.8 0 0 1 8.8,4.6V7" fill="none" stroke="#f0f0f0" stroke-width="0.6"/><rect x="1.5" y="6.5" width="9" height="6.5" rx="1" fill="#e2d2a6" stroke="#777" stroke-width="0.9"/><rect x="5.4" y="8" width="1.2" height="3.2" fill="#8a7a5a"/></svg>
<svg style="left:209px;top:519px" width="14" height="14"><rect x="0.6" y="0.6" width="12.3" height="12.3" rx="1.2" fill="#eef0f2" stroke="#5a5a5a" stroke-width="1.2"/><path d="M6.75,1V12.5M1,6.75H12.5" stroke="#6a6a6a" stroke-width="1"/><circle cx="6.75" cy="6.75" r="2.8" fill="#dfe2e4" stroke="#555" stroke-width="1"/></svg>
<div class="a" style="left:228px;top:521px;line-height:10px;color:#14141c;font-weight:bold">X:</div>
<div class="fld" style="left:237px;top:518px;width:47px;height:16px;padding-top:3px;padding-left:1px;color:#8c8c8c;background:#dadada;border-color:#3c3c3c #f0f0f0 #f0f0f0 #3c3c3c">4,321</div>
<div class="a" style="left:295px;top:521px;line-height:10px;color:#14141c;font-weight:bold">Y:</div>
<div class="fld" style="left:304px;top:518px;width:46px;height:16px;padding-top:3px;padding-left:1px;color:#8c8c8c;background:#dadada;border-color:#3c3c3c #f0f0f0 #f0f0f0 #3c3c3c">-5,541</div>
<div class="a" style="left:361px;top:521px;line-height:10px;color:#14141c;font-weight:bold">Z:</div>
<div class="fld" style="left:371px;top:518px;width:46px;height:16px;padding-top:3px;padding-left:1px;color:#8c8c8c;background:#dadada;border-color:#3c3c3c #f0f0f0 #f0f0f0 #3c3c3c">0,0</div>
<div class="a" style="left:428px;top:518px;width:82px;height:17px;border:1px solid;border-color:#8a8a8a #e8e8e8 #e8e8e8 #8a8a8a;background:#c4c4c4;padding:3px 0 0 4px;line-height:10px">Grid = 10,0</div>
<div class="a" style="left:409px;top:538px;width:16px;height:16px;background:#f0c850;border:1px solid #d0a830"></div>
<svg style="left:411px;top:540px" width="13" height="13"><path d="M1,4L4,1H11.5V8.5L8.5,11.5H1Z" fill="#f4f4f4" stroke="#444" stroke-width="0.9"/><path d="M1,4H8.5V11.5M8.5,4L11.5,1" fill="none" stroke="#444" stroke-width="0.9"/></svg>
<div class="a" style="left:428px;top:537px;width:82px;height:18px;border:1px solid;border-color:#8a8a8a #e8e8e8 #e8e8e8 #8a8a8a;background:#c4c4c4;padding:4px 0 0 4px;line-height:10px">Add Time Tag</div>
<!-- anim controls -->
<div class="a" style="left:512px;top:517px;width:36px;height:36px;border:1px solid;border-color:#eaeaea #8a8a8a #8a8a8a #eaeaea;background:#c6c6c6"></div>
<svg style="left:519px;top:529px" width="22" height="11"><circle cx="5" cy="5" r="3.6" fill="none" stroke="#000" stroke-width="2"/><path d="M8.5,5H20" stroke="#000" stroke-width="2.4"/><path d="M13.5,5V9M17,5V8.5M19.5,5V8" stroke="#000" stroke-width="1.6"/></svg>
<div class="a" style="left:550px;top:517px;width:39px;height:17px;border:1px solid;border-color:#eaeaea #8a8a8a #8a8a8a #eaeaea;background:#c6c6c6;text-align:center;padding-top:3px;line-height:10px">Auto Key</div>
<div class="a" style="left:550px;top:535px;width:39px;height:18px;border:1px solid;border-color:#eaeaea #8a8a8a #8a8a8a #eaeaea;background:#c6c6c6;text-align:center;padding-top:4px;line-height:10px">Set Key</div>
<div class="a" style="left:591px;top:517px;width:95px;height:17px;border-style:solid;border-width:2px 1px 1px 2px;border-color:#555 #f4f4f4 #f4f4f4 #555;background:linear-gradient(#e8e8e8,#f4f4f4);padding:3px 0 0 2px;line-height:10px">Selected</div>
<svg style="left:674px;top:522px" width="10" height="6"><path d="M1,1L4.5,4.5L8,1" fill="none" stroke="#444" stroke-width="1.3"/></svg>
<svg style="left:588px;top:532px" width="30" height="23"><path d="M6,17.5H13.5M10.5,7.5H18.3" stroke="#6070e0" stroke-width="1"/><path d="M6.3,12L9.6,17.3L14.2,7.4L17.7,12" fill="none" stroke="#d42a2a" stroke-width="1.2" stroke-linejoin="round"/><circle cx="9.6" cy="17.3" r="0.8" fill="#333"/><circle cx="14.2" cy="7.4" r="0.8" fill="#333"/><path d="M17.5,19.5L20,17L20.5,19.5Z" fill="#fff"/><circle cx="19.5" cy="19.2" r="1" fill="#111"/></svg>
<div class="a" style="left:612px;top:535px;width:73px;height:18px;border:1px solid;border-color:#eaeaea #8a8a8a #8a8a8a #eaeaea;background:#c6c6c6;text-align:center;padding-top:4px;line-height:10px;letter-spacing:0.2px">Key Filters...</div>
<svg style="left:691px;top:521px" width="16" height="9"><path d="M1,0.5V8.5" stroke="#111" stroke-width="2"/><path d="M2,4.5L8,0.5V8.5Z M7,4.5L13,0.5V8.5Z" fill="#111"/></svg>
<div class="a" style="left:709px;top:519px;width:1px;height:14px;background:#8c8c8c;border-right:1px solid #e8e8e8;box-sizing:content-box"></div>
<svg style="left:712px;top:521px" width="10" height="9"><path d="M1,4.5L7,0.5V8.5Z" fill="#111"/></svg>
<svg style="left:691px;top:540px" width="15" height="9"><path d="M1,0.5V8.5M13.5,0.5V8.5" stroke="#222" stroke-width="1.3"/><path d="M2,4.5L6.5,1V8Z M12.5,4.5L8,1V8Z" fill="#222"/></svg>
<div class="fld" style="left:710px;top:536px;width:14px;height:19px;padding-top:5px;color:#303090;background:#f0f0f0">0</div>
</body></html>
